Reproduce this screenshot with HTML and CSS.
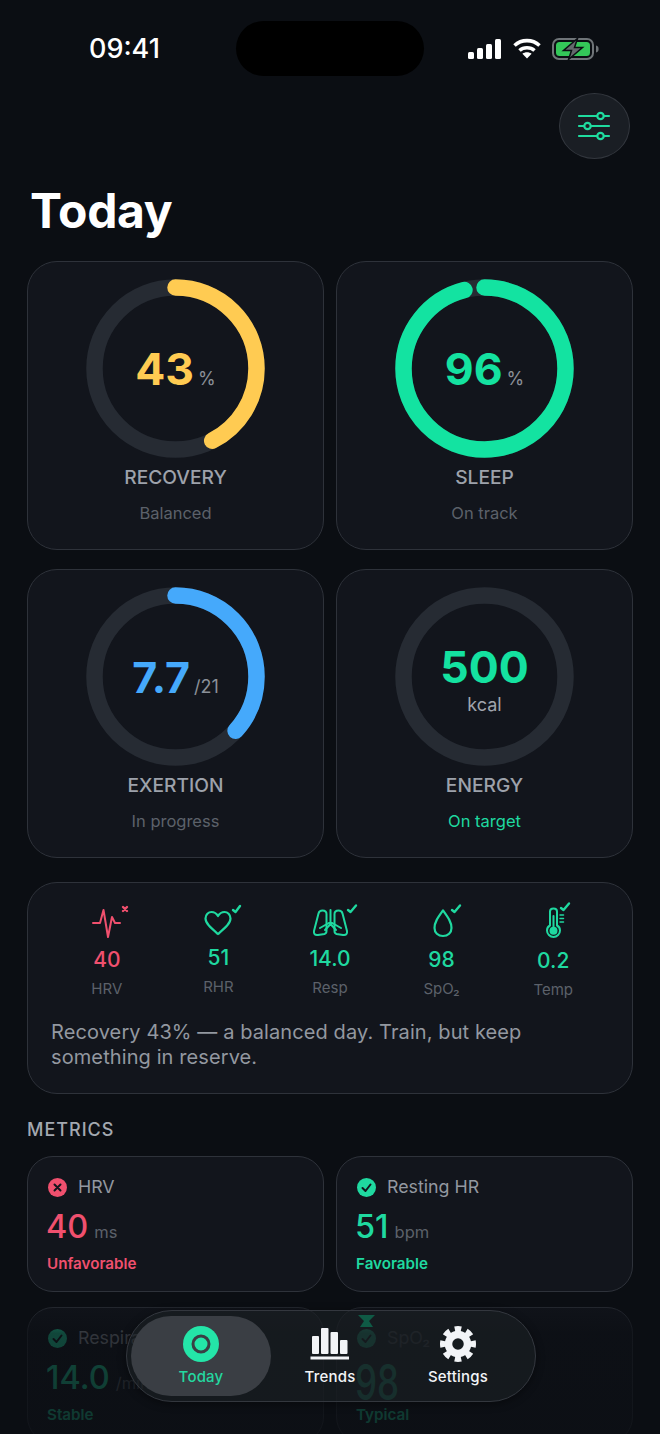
FILE: index.html
```html
<!DOCTYPE html>
<html lang="en">
<head>
    <meta charset="UTF-8">
    <meta name="viewport" content="width=device-width, initial-scale=1.0">
    <title>Today</title>
    <link rel="stylesheet" href="styles.css">
</head>
<body>
    <div class="screen">
        <div class="status-bar">
            <span class="time">09:41</span>
            <div class="island"></div>
            <div class="status-icons">
                <svg width="34" height="20" viewBox="0 0 34 20" fill="#fff">
                    <rect x="0" y="13" width="6" height="7" rx="1.5"/>
                    <rect x="9" y="9" width="6" height="11" rx="1.5"/>
                    <rect x="18" y="5" width="6" height="15" rx="1.5"/>
                    <rect x="27" y="0" width="6" height="20" rx="1.5"/>
                </svg>
                <svg width="28" height="21" viewBox="0 0 28 21" fill="none" stroke="#fff" stroke-width="3.6">
                    <path d="M1.5 7.5C8.5 1 19.5 1 26.5 7.5"/>
                    <path d="M6.5 12.5C10.5 8.8 17.5 8.8 21.5 12.5"/>
                    <path d="M14 20.5l-4.6-4.7c2.6-2 6.6-2 9.2 0z" fill="#fff" stroke="none"/>
                </svg>
                <svg width="47" height="22" viewBox="0 0 47 22" fill="none">
                    <rect x="1" y="1" width="40" height="20" rx="6" stroke="#6f7478" stroke-width="2"/>
                    <rect x="4" y="4" width="34" height="14" rx="3.5" fill="#34c759"/>
                    <path d="M44 7.5c2 .6 2.6 1.8 2.6 3.5s-.6 2.9-2.6 3.5z" fill="#6f7478"/>
                    <path d="M25.500 0.500L11.500 12.500H19.500L16.500 21.500L30.500 9.500H22.500Z" fill="#64696d" stroke="#0b0e13" stroke-width="1.500"/>
                </svg>
            </div>
        </div>

        <div class="top-actions">
            <button class="filter-btn">
                <svg width="34" height="30" viewBox="0 0 34 30" fill="none" stroke="#1fdc9f" stroke-width="2.2" stroke-linecap="round">
                    <path d="M2 5H20M27 5H32"/>
                    <circle cx="23.500" cy="5" r="3.200"/>
                    <path d="M2 15H7M14 15H32"/>
                    <circle cx="10.500" cy="15" r="3.200"/>
                    <path d="M2 25H20M27 25H32"/>
                    <circle cx="23.500" cy="25" r="3.200"/>
                </svg>
            </button>
        </div>

        <h1 class="page-title">Today</h1>

        <div class="ring-grid">
            <div class="card ring-card">
                <div class="ring">
                    <svg width="179" height="179" viewBox="0 0 179 179" fill="none">
                        <circle class="ring-track" cx="89.500" cy="89.500" r="81"/>
                        <circle class="ring-value" cx="89.500" cy="89.500" r="81" stroke="#ffcb52" pathLength="100" stroke-dasharray="42.500 100" transform="rotate(-90 89.500 89.500)"/>
                    </svg>
                    <div class="ring-center">
                        <span class="ring-num yellow">43</span><span class="ring-unit">%</span>
                    </div>
                </div>
                <div class="ring-title">RECOVERY</div>
                <div class="ring-note">Balanced</div>
            </div>

            <div class="card ring-card">
                <div class="ring">
                    <svg width="179" height="179" viewBox="0 0 179 179" fill="none">
                        <circle class="ring-track" cx="89.500" cy="89.500" r="81"/>
                        <circle class="ring-value" cx="89.500" cy="89.500" r="81" stroke="#13e3a1" pathLength="100" stroke-dasharray="96 100" transform="rotate(-90 89.500 89.500)"/>
                    </svg>
                    <div class="ring-center">
                        <span class="ring-num mint">96</span><span class="ring-unit">%</span>
                    </div>
                </div>
                <div class="ring-title">SLEEP</div>
                <div class="ring-note">On track</div>
            </div>

            <div class="card ring-card">
                <div class="ring">
                    <svg width="179" height="179" viewBox="0 0 179 179" fill="none">
                        <circle class="ring-track" cx="89.500" cy="89.500" r="81"/>
                        <circle class="ring-value" cx="89.500" cy="89.500" r="81" stroke="#45a9fb" pathLength="100" stroke-dasharray="36.700 100" transform="rotate(-90 89.500 89.500)"/>
                    </svg>
                    <div class="ring-center">
                        <span class="ring-num ring-num-sm blue">7.7</span><span class="ring-unit">/21</span>
                    </div>
                </div>
                <div class="ring-title">EXERTION</div>
                <div class="ring-note">In progress</div>
            </div>

            <div class="card ring-card">
                <div class="ring">
                    <svg width="179" height="179" viewBox="0 0 179 179" fill="none">
                        <circle class="ring-track" cx="89.500" cy="89.500" r="81"/>
                    </svg>
                    <div class="ring-center ring-center-stack">
                        <span class="ring-num mint">500</span>
                        <span class="ring-kcal">kcal</span>
                    </div>
                </div>
                <div class="ring-title">ENERGY</div>
                <div class="ring-note green">On target</div>
            </div>
        </div>

        <div class="card vitals-card">
            <div class="vitals">
                <div class="vital">
                    <svg class="vital-icon" width="46" height="42" viewBox="0 0 46 42" fill="none" stroke="#f0506e" stroke-width="2" stroke-linecap="round" stroke-linejoin="round">
                        <path d="M9 22H16L19.500 9L24 36L28 16L31 22H36"/>
                        <path d="M39 6L43 10M43 6L39 10" stroke-width="2.400"/>
                    </svg>
                    <div class="vital-num red">40</div>
                    <div class="vital-label">HRV</div>
                </div>
                <div class="vital">
                    <svg class="vital-icon" width="46" height="40" viewBox="0 0 46 40" fill="none" stroke="#1fd9a0" stroke-width="2.200" stroke-linecap="round" stroke-linejoin="round">
                        <path d="M23 33C16 27 10.500 22.500 10.500 17.500C10.500 13.500 13.500 11 16.500 11C19.500 11 21.500 12.500 23 15C24.500 12.500 26.500 11 29.500 11C32.500 11 35.500 13.500 35.500 17.500C35.500 22.500 30 27 23 33Z"/>
                        <path d="M38 9L40.500 11L45 5" stroke-width="2.400"/>
                    </svg>
                    <div class="vital-num green">51</div>
                    <div class="vital-label">RHR</div>
                </div>
                <div class="vital">
                    <svg class="vital-icon" width="46" height="41" viewBox="0 0 46 41" fill="none" stroke="#1fd9a0" stroke-width="2" stroke-linecap="round" stroke-linejoin="round">
                        <path d="M23.500 9V23M23.500 21L13 27M23.500 21L34 27M23.500 23L18 29M23.500 23L29 29"/>
                        <path d="M19.500 13C19.500 10.500 17.500 9.500 15.500 9.500C13.500 9.500 12 10.500 11.500 12.500L7 30C6.500 33 8 34.500 11 34L17.500 33C19 32.500 19.500 31.500 19.500 30Z"/>
                        <path d="M27.500 13C27.500 10.500 29.500 9.500 31.500 9.500C33.500 9.500 35 10.500 35.500 12.500L40 30C40.500 33 39 34.500 36 34L29.500 33C28 32.500 27.500 31.500 27.500 30Z"/>
                        <path d="M41 9L43.500 11L49 4.500" stroke-width="2.400"/>
                    </svg>
                    <div class="vital-num green">14.0</div>
                    <div class="vital-label">Resp</div>
                </div>
                <div class="vital">
                    <svg class="vital-icon" width="46" height="42" viewBox="0 0 46 42" fill="none" stroke="#1fd9a0" stroke-width="2.200" stroke-linecap="round" stroke-linejoin="round">
                        <path d="M24 9.500C19 16.500 15.500 21 15.500 27C15.500 31.500 19 35 24 35C29 35 32.500 31.500 32.500 27C32.500 21 29 16.500 24 9.500Z"/>
                        <path d="M33 9L35.500 11L41 4.500" stroke-width="2.400"/>
                    </svg>
                    <div class="vital-num green">98</div>
                    <div class="vital-label">SpO₂</div>
                </div>
                <div class="vital">
                    <svg class="vital-icon" width="46" height="43" viewBox="0 0 46 43" fill="none" stroke="#1fd9a0" stroke-width="2" stroke-linecap="round" stroke-linejoin="round">
                        <path d="M20 24.500V10.500C20 8.500 21.500 7.500 23.500 7.500C25.500 7.500 27 8.500 27 10.500V24.500C29 25.500 30 27.500 30 29.500C30 33 27 36 23.500 36C20 36 17 33 17 29.500C17 27.500 18 25.500 20 24.500Z"/>
                        <path d="M23.500 15V28"/>
                        <circle cx="23.500" cy="29.700" r="4" fill="#1fd9a0" stroke="none"/>
                        <path d="M30 14H33.500M30 17.500H33.500M30 21H33.500" stroke-width="1.500"/>
                        <path d="M31 7L33.500 9L39 2.500" stroke-width="2.400"/>
                    </svg>
                    <div class="vital-num green">0.2</div>
                    <div class="vital-label">Temp</div>
                </div>
            </div>
            <p class="vitals-text">Recovery 43% — a balanced day. Train, but keep something in reserve.</p>
        </div>

        <div class="section-label">METRICS</div>

        <div class="metric-grid">
            <div class="card metric-card">
                <div class="metric-head">
                    <svg class="metric-dot" width="19" height="19" viewBox="0 0 19 19">
                        <circle cx="9.500" cy="9.500" r="9.500" fill="#f0506e"/>
                        <path d="M6.500 6.500L12.500 12.500M12.500 6.500L6.500 12.500" stroke="#12151c" stroke-width="2" stroke-linecap="round"/>
                    </svg>
                    <span>HRV</span>
                </div>
                <div class="metric-value"><span class="metric-num red">40</span><span class="metric-unit">ms</span></div>
                <div class="metric-status red">Unfavorable</div>
            </div>
            <div class="card metric-card">
                <div class="metric-head">
                    <svg class="metric-dot" width="19" height="19" viewBox="0 0 19 19">
                        <circle cx="9.500" cy="9.500" r="9.500" fill="#1fd9a0"/>
                        <path d="M5.500 10L8.500 13L13.500 6.500" fill="none" stroke="#12151c" stroke-width="2" stroke-linecap="round" stroke-linejoin="round"/>
                    </svg>
                    <span>Resting HR</span>
                </div>
                <div class="metric-value"><span class="metric-num green">51</span><span class="metric-unit">bpm</span></div>
                <div class="metric-status green">Favorable</div>
            </div>
            <div class="card metric-card">
                <div class="metric-head">
                    <svg class="metric-dot" width="19" height="19" viewBox="0 0 19 19">
                        <circle cx="9.500" cy="9.500" r="9.500" fill="#1fd9a0"/>
                        <path d="M5.500 10L8.500 13L13.500 6.500" fill="none" stroke="#12151c" stroke-width="2" stroke-linecap="round" stroke-linejoin="round"/>
                    </svg>
                    <span>Respiratory rate</span>
                </div>
                <div class="metric-value"><span class="metric-num green">14.0</span><span class="metric-unit">/min</span></div>
                <div class="metric-status green">Stable</div>
            </div>
            <div class="card metric-card">
                <div class="metric-head">
                    <svg class="metric-dot" width="19" height="19" viewBox="0 0 19 19">
                        <circle cx="9.500" cy="9.500" r="9.500" fill="#1fd9a0"/>
                        <path d="M5.500 10L8.500 13L13.500 6.500" fill="none" stroke="#12151c" stroke-width="2" stroke-linecap="round" stroke-linejoin="round"/>
                    </svg>
                    <span class="metric-dim">SpO₂</span>
                </div>
                <div class="metric-value"><span class="metric-num metric-num-glass green">98</span></div>
                <div class="metric-status green">Typical</div>
            </div>
        </div>

        <div class="bottom-fade"></div>

        <nav class="tab-bar">
            <svg class="glass-echo" width="19" height="12" viewBox="0 0 19 12">
                <path d="M1 0H18L12 6L16 12H3L7 6Z" fill="#0f5a45"/>
            </svg>
            <div class="tab tab-active">
                <svg width="36" height="36" viewBox="0 0 36 36">
                    <circle cx="18" cy="18" r="18" fill="#24e5a8"/>
                    <circle cx="18" cy="18" r="8" fill="#24e5a8" stroke="#3a3e44" stroke-width="3"/>
                </svg>
                <span>Today</span>
            </div>
            <div class="tab">
                <svg width="40" height="36" viewBox="0 0 40 36" fill="#f2f4f7">
                    <rect x="2" y="10" width="7" height="18" rx="1"/>
                    <rect x="11" y="2" width="7.500" height="26" rx="1"/>
                    <rect x="20.500" y="6" width="7.500" height="22" rx="1"/>
                    <rect x="30" y="14" width="7.500" height="14" rx="1"/>
                    <rect x="0.500" y="30.500" width="38.500" height="3"/>
                </svg>
                <span>Trends</span>
            </div>
            <div class="tab">
                <svg width="36" height="36" viewBox="0 0 36 36" fill="none" stroke="#f2f4f7">
                    <circle cx="18" cy="18" r="9.500" stroke-width="7.500"/>
                    <circle cx="18" cy="18" r="15" stroke-width="6" pathLength="80" stroke-dasharray="5.500 4.500" stroke-dashoffset="2.750"/>
                </svg>
                <span>Settings</span>
            </div>
        </nav>
    </div>
</body>
</html>
```

FILE: styles.css
```css
* {
    box-sizing: border-box;
}

body {
    margin: 0;
    background-color: #0b0e13;
    font-family: Inter, 'Noto Sans', sans-serif;
    color: #fff;
}

.screen {
    position: relative;
    width: 660px;
    height: 1434px;
    overflow: hidden;
    padding: 0 27px;
    background-color: #0b0e13;
}

.status-bar {
    display: flex;
    align-items: center;
    height: 55px;
    margin: 21px -27px 0;
    position: relative;
}

.time {
    position: absolute;
    left: 89px;
    top: 11px;
    font-size: 27px;
    font-weight: 500;
    line-height: 34px;
}

.island {
    width: 188px;
    height: 55px;
    margin-left: 236px;
    border-radius: 28px;
    background-color: #000;
}

.status-icons {
    display: flex;
    align-items: center;
    gap: 11px;
    margin-left: 44px;
}

.top-actions {
    display: flex;
    justify-content: flex-end;
    margin-top: 17px;
    padding-right: 3px;
}

.filter-btn {
    display: flex;
    align-items: center;
    justify-content: center;
    width: 71px;
    height: 66px;
    padding: 0 2px 0 0;
    border: 1px solid #33373e;
    border-radius: 50%;
    background-color: #1a1e24;
}

.page-title {
    margin: 22px 0 0 3px;
    font-size: 48px;
    font-weight: 700;
    line-height: 60px;
    letter-spacing: -0.3px;
}

.ring-grid {
    display: grid;
    grid-template-columns: 297px 297px;
    column-gap: 12px;
    row-gap: 19px;
    margin-top: 20px;
}

.card {
    border: 1px solid #2e323a;
    background-color: #12151c;
}

.ring-card {
    display: flex;
    flex-direction: column;
    align-items: center;
    height: 289px;
    padding-top: 17px;
    border-radius: 30px;
}

.ring {
    position: relative;
    width: 179px;
    height: 179px;
}

.ring svg {
    display: block;
}

.ring-track {
    stroke: #262b33;
    stroke-width: 16.500;
}

.ring-value {
    stroke-width: 16.500;
    stroke-linecap: round;
}

.ring-center {
    position: absolute;
    inset: 0;
    display: flex;
    align-items: baseline;
    justify-content: center;
    padding-top: 61px;
}

.ring-center-stack {
    flex-direction: column;
    align-items: center;
    justify-content: flex-start;
    padding-top: 51px;
}

.ring-num {
    font-size: 44.500px;
    font-weight: 700;
    line-height: 58px;
}

.ring-num-sm {
    font-size: 43px;
}

.ring-unit {
    margin-left: 4px;
    font-size: 18px;
    color: #8b9098;
}

.ring-kcal {
    margin-top: -3px;
    font-size: 18px;
    line-height: 24px;
    color: #a0a5ad;
}

.ring-title {
    margin-top: 6px;
    font-size: 19.200px;
    font-weight: 500;
    line-height: 26px;
    color: #9da2ab;
}

.ring-note {
    margin-top: 12px;
    font-size: 16.500px;
    line-height: 22px;
    color: #5c616a;
}

.yellow {
    color: #ffcb52;
}

.green {
    color: #1fd9a0;
}

.mint {
    color: #14e2a0;
}

.blue {
    color: #45a9fb;
}

.red {
    color: #f0506e;
}

.vitals-card {
    height: 212px;
    margin-top: 24px;
    padding: 18px 23px 0;
    border-radius: 30px;
}

.vitals {
    display: grid;
    grid-template-columns: repeat(5, 1fr);
}

.vital {
    display: flex;
    flex-direction: column;
    align-items: center;
}

.vital-icon {
    display: block;
    overflow: visible;
}

.vital-num {
    margin-top: 3px;
    font-size: 21px;
    font-weight: 550;
    line-height: 28px;
}

.vital-label {
    margin-top: 5px;
    font-size: 15px;
    line-height: 20px;
    color: #5c616a;
}

.vitals-text {
    margin: 20px 0 0;
    width: 490px;
    font-size: 20px;
    line-height: 25px;
    letter-spacing: 0.1px;
    color: #9398a0;
}

.section-label {
    margin-top: 24px;
    font-size: 18px;
    font-weight: 500;
    line-height: 24px;
    letter-spacing: 1px;
    color: #a3a8b0;
}

.metric-grid {
    display: grid;
    grid-template-columns: 297px 297px;
    column-gap: 12px;
    row-gap: 15px;
    margin-top: 14px;
}

.metric-card {
    height: 136px;
    padding: 18px 19px 0;
    border-radius: 26px;
}

.metric-head {
    display: flex;
    align-items: center;
    gap: 11px;
    font-size: 17.800px;
    line-height: 24px;
    color: #9398a0;
    white-space: nowrap;
}

.metric-dot {
    margin-left: 1px;
}

.metric-dim {
    opacity: 0.55;
}

.metric-value {
    display: flex;
    align-items: baseline;
    gap: 6px;
    height: 44px;
    margin-top: 6px;
}

.metric-num {
    margin-left: -1px;
    font-size: 32.500px;
    font-weight: 500;
    line-height: 44px;
}

/* the big number behind the tab bar gets stretched by the glass */
.metric-num-glass {
    font-size: 35px;
    line-height: 28px;
    transform: translateY(12px) scaleY(1.4);
}

.metric-unit {
    font-size: 16.500px;
    color: #5c616a;
}

.metric-status {
    margin-top: 5px;
    font-size: 15.200px;
    font-weight: 600;
    line-height: 20px;
}

.bottom-fade {
    position: absolute;
    left: 0;
    right: 0;
    bottom: 0;
    height: 134px;
    background: linear-gradient(to bottom, rgba(11, 14, 19, 0.2), rgba(11, 14, 19, 0.72) 25%, rgba(11, 14, 19, 0.8));
}

.tab-bar {
    position: absolute;
    left: 126px;
    top: 1310px;
    display: flex;
    align-items: center;
    width: 410px;
    height: 92px;
    padding: 0 4px;
    border: 1px solid #33373e;
    border-radius: 46px;
    background-color: rgba(30, 34, 39, 0.55);
    box-shadow: 0 2px 8px rgba(0, 0, 0, 0.4);
}

.glass-echo {
    position: absolute;
    left: 230px;
    top: 4px;
}

.tab {
    display: flex;
    flex-direction: column;
    align-items: center;
    gap: 5px;
    width: 128px;
    font-size: 15px;
    font-weight: 500;
    line-height: 20px;
    letter-spacing: 0.2px;
    color: #f2f4f7;
}

.tab svg {
    display: block;
}

.tab-active {
    justify-content: center;
    width: 140px;
    height: 80px;
    margin-right: -5px;
    border-radius: 40px;
    background-color: #3a3e44;
    color: #24d8a0;
}
```
